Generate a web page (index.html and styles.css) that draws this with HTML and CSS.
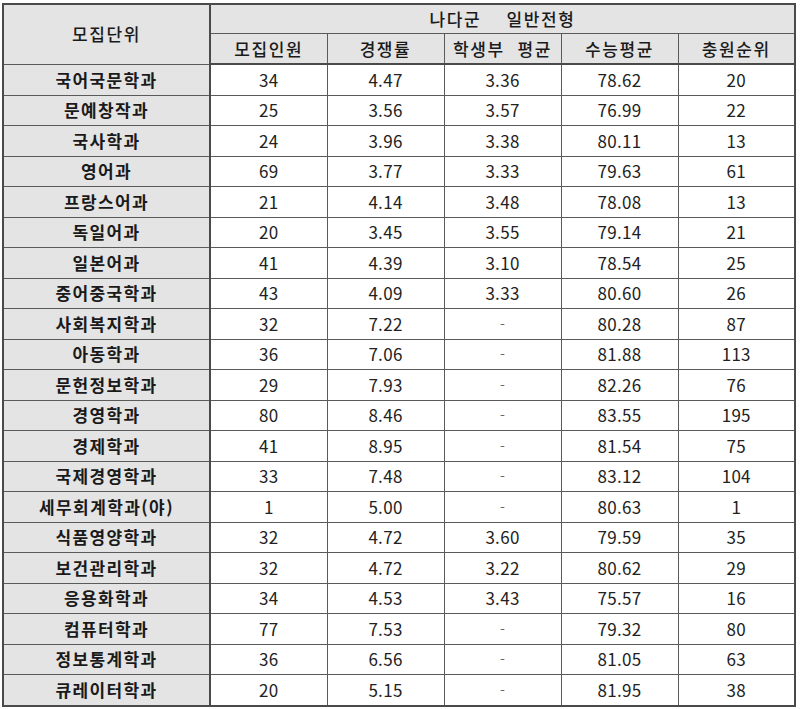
FILE: index.html
```html
<!DOCTYPE html>
<html lang="ko">
<head>
<meta charset="utf-8">
<link rel="stylesheet" href="styles.css">
</head>
<body>
<table class="grid">
  <colgroup>
    <col class="c-name"><col class="c-num"><col class="c-num"><col class="c-num"><col class="c-num"><col class="c-last">
  </colgroup>
  <thead>
    <tr class="h1"><th rowspan="2" class="unit">모집단위</th><th colspan="5">나다군&nbsp;&nbsp;&nbsp;&nbsp;일반전형</th></tr>
    <tr class="h2"><th>모집인원</th><th>경쟁률</th><th>학생부&nbsp;&nbsp;평균</th><th>수능평균</th><th>충원순위</th></tr>
  </thead>
  <tbody>
    <tr><th>국어국문학과</th><td>34</td><td>4.47</td><td>3.36</td><td>78.62</td><td>20</td></tr>
    <tr><th>문예창작과</th><td>25</td><td>3.56</td><td>3.57</td><td>76.99</td><td>22</td></tr>
    <tr><th>국사학과</th><td>24</td><td>3.96</td><td>3.38</td><td>80.11</td><td>13</td></tr>
    <tr><th>영어과</th><td>69</td><td>3.77</td><td>3.33</td><td>79.63</td><td>61</td></tr>
    <tr><th>프랑스어과</th><td>21</td><td>4.14</td><td>3.48</td><td>78.08</td><td>13</td></tr>
    <tr><th>독일어과</th><td>20</td><td>3.45</td><td>3.55</td><td>79.14</td><td>21</td></tr>
    <tr><th>일본어과</th><td>41</td><td>4.39</td><td>3.10</td><td>78.54</td><td>25</td></tr>
    <tr><th>중어중국학과</th><td>43</td><td>4.09</td><td>3.33</td><td>80.60</td><td>26</td></tr>
    <tr><th>사회복지학과</th><td>32</td><td>7.22</td><td class="dash">-</td><td>80.28</td><td>87</td></tr>
    <tr><th>아동학과</th><td>36</td><td>7.06</td><td class="dash">-</td><td>81.88</td><td>113</td></tr>
    <tr><th>문헌정보학과</th><td>29</td><td>7.93</td><td class="dash">-</td><td>82.26</td><td>76</td></tr>
    <tr><th>경영학과</th><td>80</td><td>8.46</td><td class="dash">-</td><td>83.55</td><td>195</td></tr>
    <tr><th>경제학과</th><td>41</td><td>8.95</td><td class="dash">-</td><td>81.54</td><td>75</td></tr>
    <tr><th>국제경영학과</th><td>33</td><td>7.48</td><td class="dash">-</td><td>83.12</td><td>104</td></tr>
    <tr><th>세무회계학과(야)</th><td>1</td><td>5.00</td><td class="dash">-</td><td>80.63</td><td>1</td></tr>
    <tr><th>식품영양학과</th><td>32</td><td>4.72</td><td>3.60</td><td>79.59</td><td>35</td></tr>
    <tr><th>보건관리학과</th><td>32</td><td>4.72</td><td>3.22</td><td>80.62</td><td>29</td></tr>
    <tr><th>응용화학과</th><td>34</td><td>4.53</td><td>3.43</td><td>75.57</td><td>16</td></tr>
    <tr><th>컴퓨터학과</th><td>77</td><td>7.53</td><td class="dash">-</td><td>79.32</td><td>80</td></tr>
    <tr><th>정보통계학과</th><td>36</td><td>6.56</td><td class="dash">-</td><td>81.05</td><td>63</td></tr>
    <tr><th>큐레이터학과</th><td>20</td><td>5.15</td><td class="dash">-</td><td>81.95</td><td>38</td></tr>
  </tbody>
</table>
</body>
</html>
```
FILE: styles.css
```css
html, body {
  margin: 0;
  padding: 0;
  background: #ffffff;
}
body {
  padding: 3px 0 0 2px;
  font-family: "Noto Sans CJK KR", "Noto Sans", sans-serif;
  color: #222222;
}
.grid {
  border-collapse: collapse;
  width: 792px;
  table-layout: fixed;
  border: 2px solid #4a4a4a;
}
.c-name { width: 207px; }
.c-num { width: 117px; }
.c-last { width: 117px; }
.grid th, .grid td {
  border: 1px solid #5a5a5a;
  text-align: center;
  padding: 0;
  font-size: 16px;
  line-height: 20px;
  letter-spacing: 1px;
}
.grid thead th {
  background: #e4e4e4;
  font-weight: 500;
  font-size: 17px;
  letter-spacing: 1.6px;
  color: #1a1a1a;
}
.grid .h1 th { height: 28px; }
.grid .h2 th { height: 29px; border-bottom: 2px solid #4a4a4a; }
.grid .unit { border-right: 2px solid #4a4a4a; }
.grid tbody th {
  background: #e4e4e4;
  font-weight: 700;
  font-size: 17px;
  border-right: 2px solid #4a4a4a;
  letter-spacing: 1.4px;
  color: #1a1a1a;
}
.grid tbody td {
  height: 29.5px;
  font-size: 17px;
  letter-spacing: 0.3px;
  background: #ffffff;
}
.grid td.dash { color: #666666; font-size: 14px; }
```
